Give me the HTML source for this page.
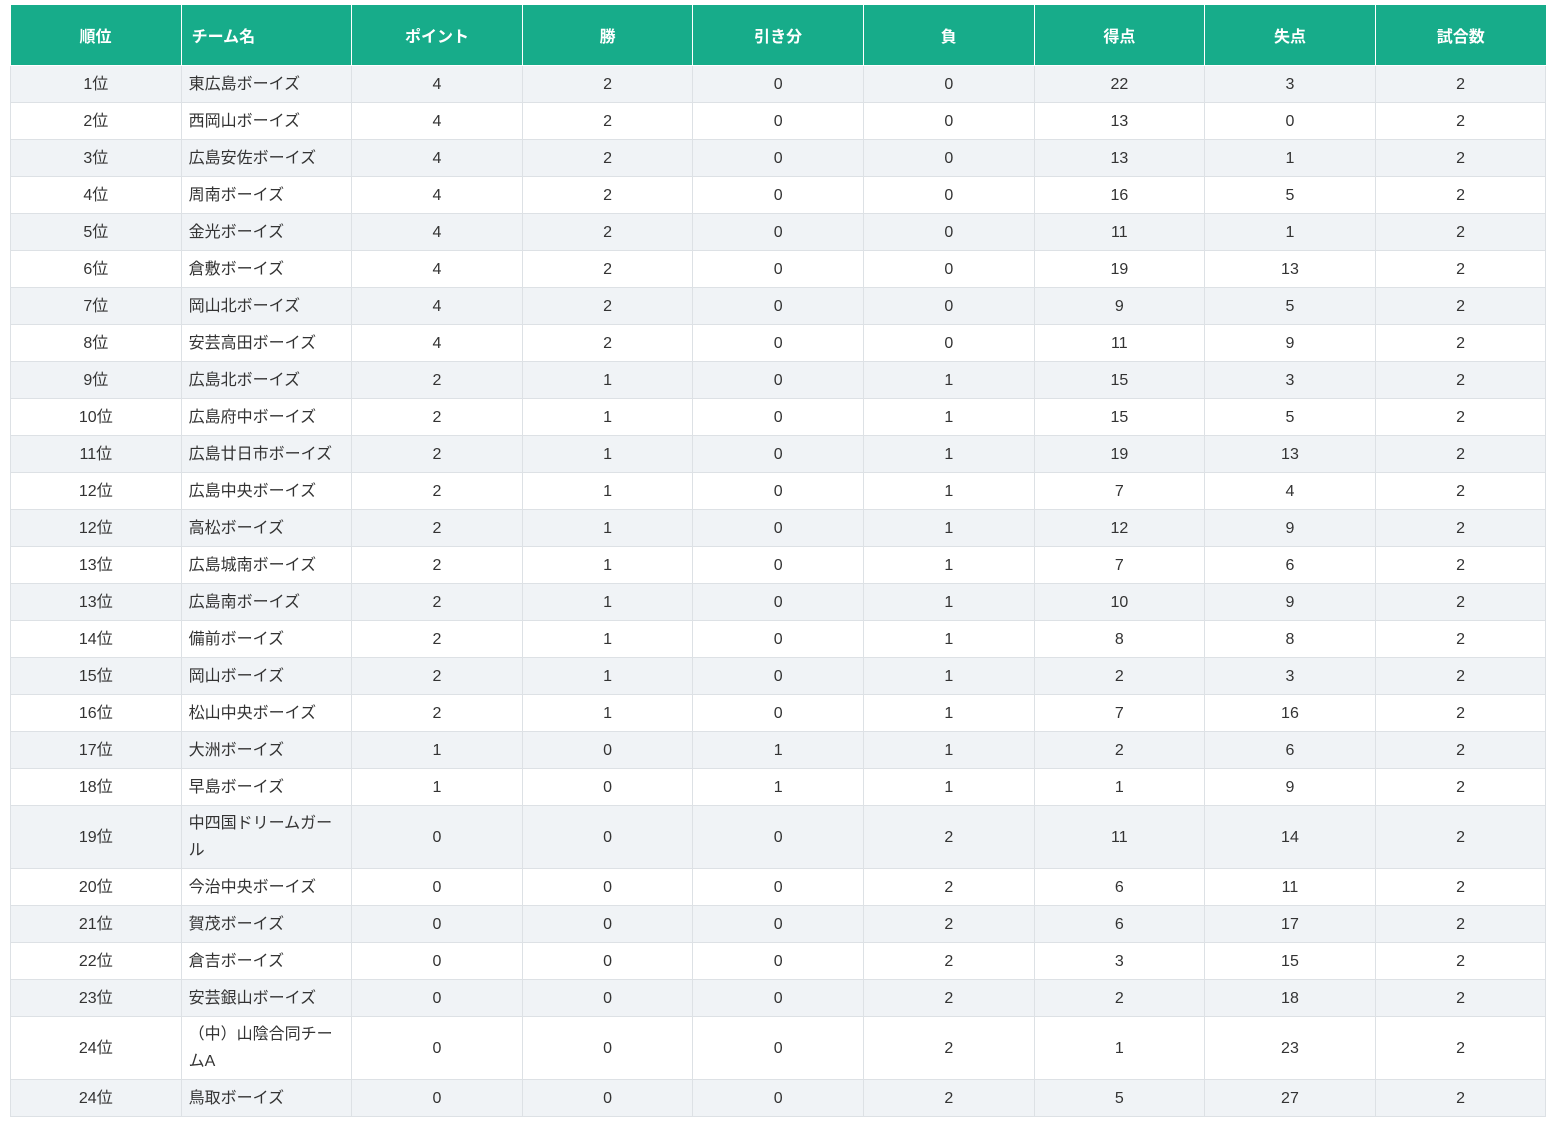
<!DOCTYPE html>
<html><head><meta charset="utf-8"><style>
body{margin:0;background:#fff;font-family:"Liberation Sans","Noto Sans CJK JP",sans-serif;}
table{position:absolute;left:10px;top:5px;width:1536px;border-collapse:collapse;table-layout:fixed;}
th{background:#17ac8a;color:#fff;font-weight:bold;font-size:16px;height:60px;padding:0;border:1px solid #fff;border-top:none;text-align:center;}
th:first-child{border-left:none}th:last-child{border-right:none}
th.n{text-align:left;padding-left:10px}
td{border:1px solid #dde1e5;font-size:16px;color:#333;text-align:center;height:36px;padding:0;line-height:27px;}
td.n{text-align:left;padding-left:7px;padding-right:14px}
tr:nth-child(odd) td{background:#f0f3f6}
tr.t td{height:62px}
</style></head><body>
<table>
<colgroup><col span="9" style="width:170.6px"></colgroup>
<thead><tr><th>順位</th><th class="n">チーム名</th><th>ポイント</th><th>勝</th><th>引き分</th><th>負</th><th>得点</th><th>失点</th><th>試合数</th></tr></thead>
<tbody>
<tr><td>1位</td><td class="n">東広島ボーイズ</td><td>4</td><td>2</td><td>0</td><td>0</td><td>22</td><td>3</td><td>2</td></tr>
<tr><td>2位</td><td class="n">西岡山ボーイズ</td><td>4</td><td>2</td><td>0</td><td>0</td><td>13</td><td>0</td><td>2</td></tr>
<tr><td>3位</td><td class="n">広島安佐ボーイズ</td><td>4</td><td>2</td><td>0</td><td>0</td><td>13</td><td>1</td><td>2</td></tr>
<tr><td>4位</td><td class="n">周南ボーイズ</td><td>4</td><td>2</td><td>0</td><td>0</td><td>16</td><td>5</td><td>2</td></tr>
<tr><td>5位</td><td class="n">金光ボーイズ</td><td>4</td><td>2</td><td>0</td><td>0</td><td>11</td><td>1</td><td>2</td></tr>
<tr><td>6位</td><td class="n">倉敷ボーイズ</td><td>4</td><td>2</td><td>0</td><td>0</td><td>19</td><td>13</td><td>2</td></tr>
<tr><td>7位</td><td class="n">岡山北ボーイズ</td><td>4</td><td>2</td><td>0</td><td>0</td><td>9</td><td>5</td><td>2</td></tr>
<tr><td>8位</td><td class="n">安芸高田ボーイズ</td><td>4</td><td>2</td><td>0</td><td>0</td><td>11</td><td>9</td><td>2</td></tr>
<tr><td>9位</td><td class="n">広島北ボーイズ</td><td>2</td><td>1</td><td>0</td><td>1</td><td>15</td><td>3</td><td>2</td></tr>
<tr><td>10位</td><td class="n">広島府中ボーイズ</td><td>2</td><td>1</td><td>0</td><td>1</td><td>15</td><td>5</td><td>2</td></tr>
<tr><td>11位</td><td class="n">広島廿日市ボーイズ</td><td>2</td><td>1</td><td>0</td><td>1</td><td>19</td><td>13</td><td>2</td></tr>
<tr><td>12位</td><td class="n">広島中央ボーイズ</td><td>2</td><td>1</td><td>0</td><td>1</td><td>7</td><td>4</td><td>2</td></tr>
<tr><td>12位</td><td class="n">高松ボーイズ</td><td>2</td><td>1</td><td>0</td><td>1</td><td>12</td><td>9</td><td>2</td></tr>
<tr><td>13位</td><td class="n">広島城南ボーイズ</td><td>2</td><td>1</td><td>0</td><td>1</td><td>7</td><td>6</td><td>2</td></tr>
<tr><td>13位</td><td class="n">広島南ボーイズ</td><td>2</td><td>1</td><td>0</td><td>1</td><td>10</td><td>9</td><td>2</td></tr>
<tr><td>14位</td><td class="n">備前ボーイズ</td><td>2</td><td>1</td><td>0</td><td>1</td><td>8</td><td>8</td><td>2</td></tr>
<tr><td>15位</td><td class="n">岡山ボーイズ</td><td>2</td><td>1</td><td>0</td><td>1</td><td>2</td><td>3</td><td>2</td></tr>
<tr><td>16位</td><td class="n">松山中央ボーイズ</td><td>2</td><td>1</td><td>0</td><td>1</td><td>7</td><td>16</td><td>2</td></tr>
<tr><td>17位</td><td class="n">大洲ボーイズ</td><td>1</td><td>0</td><td>1</td><td>1</td><td>2</td><td>6</td><td>2</td></tr>
<tr><td>18位</td><td class="n">早島ボーイズ</td><td>1</td><td>0</td><td>1</td><td>1</td><td>1</td><td>9</td><td>2</td></tr>
<tr class="t"><td>19位</td><td class="n">中四国ドリームガー<br>ル</td><td>0</td><td>0</td><td>0</td><td>2</td><td>11</td><td>14</td><td>2</td></tr>
<tr><td>20位</td><td class="n">今治中央ボーイズ</td><td>0</td><td>0</td><td>0</td><td>2</td><td>6</td><td>11</td><td>2</td></tr>
<tr><td>21位</td><td class="n">賀茂ボーイズ</td><td>0</td><td>0</td><td>0</td><td>2</td><td>6</td><td>17</td><td>2</td></tr>
<tr><td>22位</td><td class="n">倉吉ボーイズ</td><td>0</td><td>0</td><td>0</td><td>2</td><td>3</td><td>15</td><td>2</td></tr>
<tr><td>23位</td><td class="n">安芸銀山ボーイズ</td><td>0</td><td>0</td><td>0</td><td>2</td><td>2</td><td>18</td><td>2</td></tr>
<tr class="t"><td>24位</td><td class="n">（中）山陰合同チー<br>ムA</td><td>0</td><td>0</td><td>0</td><td>2</td><td>1</td><td>23</td><td>2</td></tr>
<tr><td>24位</td><td class="n">鳥取ボーイズ</td><td>0</td><td>0</td><td>0</td><td>2</td><td>5</td><td>27</td><td>2</td></tr>
</tbody></table>
</body></html>
